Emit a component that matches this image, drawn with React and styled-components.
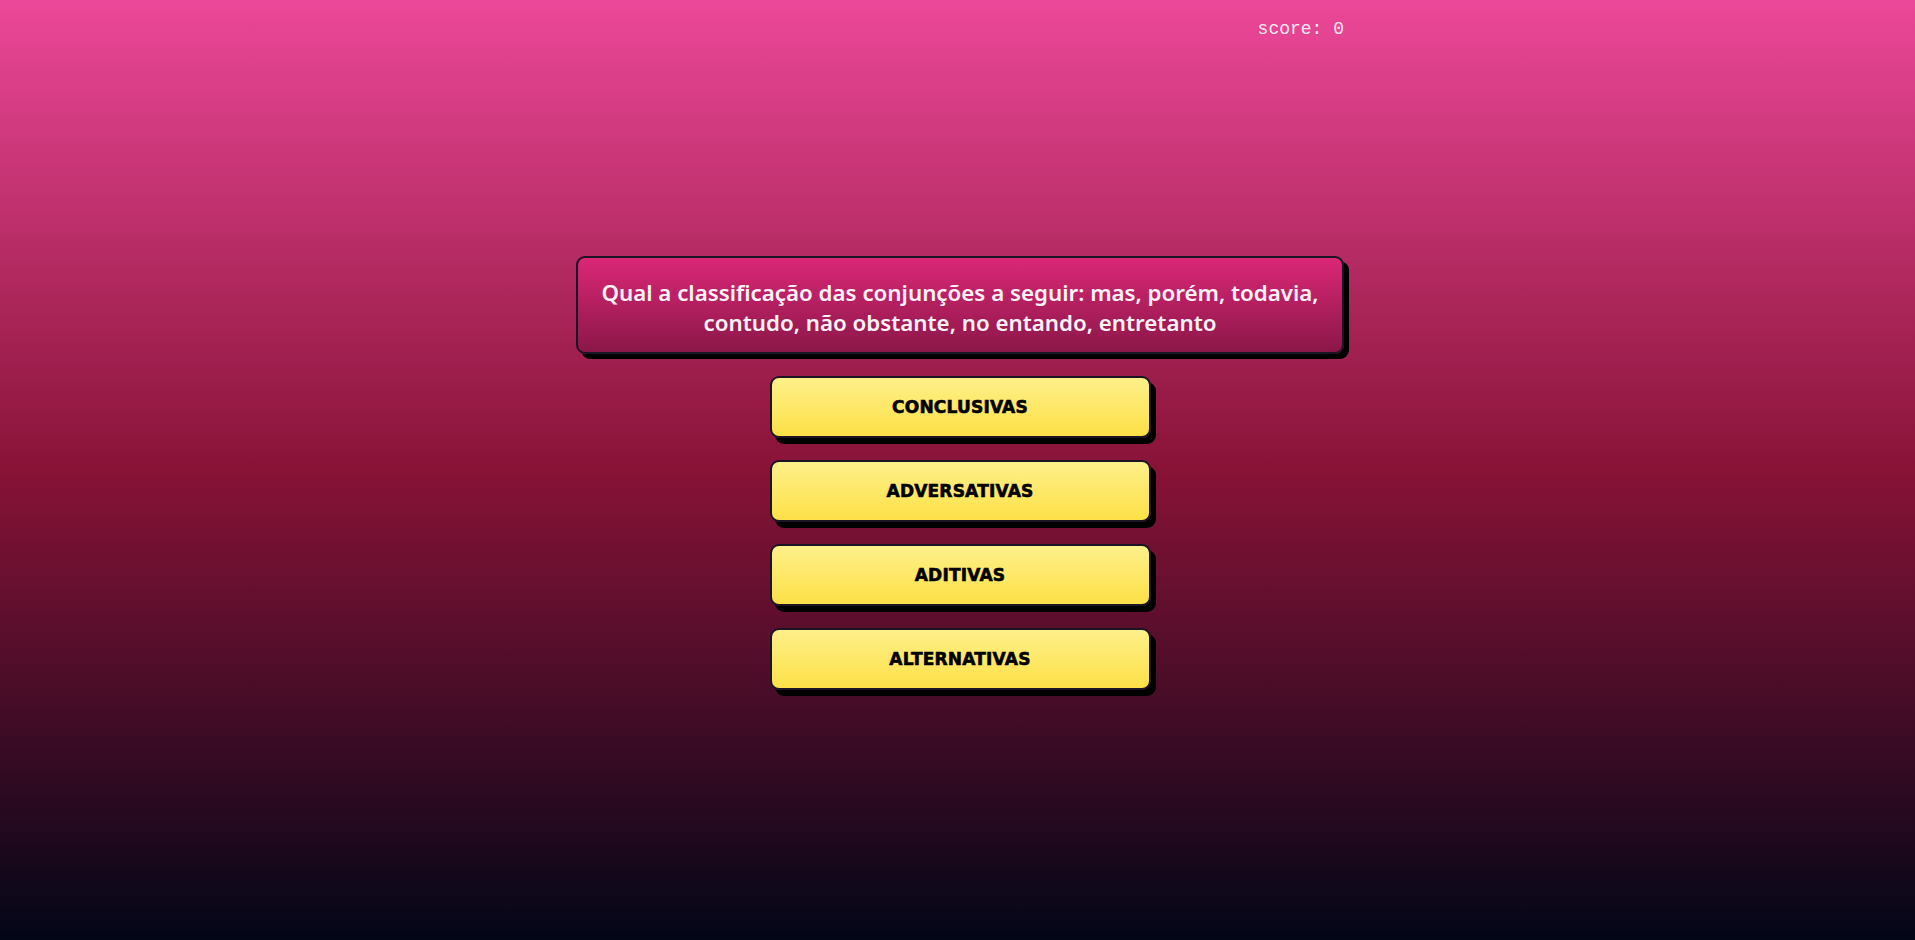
import React from 'react';
import styled, { createGlobalStyle } from 'styled-components';

const GlobalStyle = createGlobalStyle`
  html, body {
    margin: 0;
    padding: 0;
    height: 100%;
  }
  body {
    font-family: "Noto Sans", "Open Sans", sans-serif;
  }
  #root {
    min-height: 100%;
  }
`;

const Page = styled.main`
  min-height: 940px;
  box-sizing: border-box;
  padding-left: 5px;
  background: linear-gradient(to bottom, #ec4899 0%, #881337 50%, #020617 100%);
  display: flex;
  flex-direction: column;
  align-items: center;
`;

const TopBar = styled.header`
  width: 768px;
  display: flex;
  justify-content: flex-end;
  padding-top: 19px;
  height: 23px;
`;

const Score = styled.span`
  font-family: "Liberation Mono", "DejaVu Sans Mono", monospace;
  font-size: 18px;
  font-weight: 300;
  color: rgba(255, 255, 255, 0.9);
`;

const Quiz = styled.section`
  margin-top: 214px;
  width: 768px;
  display: flex;
  flex-direction: column;
  align-items: center;
  gap: 22px;
`;

const Question = styled.h1`
  box-sizing: border-box;
  width: 100%;
  margin: 0;
  padding: 20px 18px 14px;
  border: 2px solid #1a1425;
  border-radius: 9px;
  background: linear-gradient(to bottom, #db2777, #8a1748);
  box-shadow: 5px 5px 0 #000;
  color: #fdf2f8;
  font-family: "Noto Sans", "Open Sans", sans-serif;
  font-size: 22.3px;
  font-weight: 600;
  line-height: 30px;
  text-align: center;
`;

const Answer = styled.button`
  box-sizing: border-box;
  width: 381px;
  height: 62px;
  border: 2px solid #1a1425;
  border-radius: 9px;
  background: linear-gradient(to bottom, #fef08a, #fde047);
  box-shadow: 5px 6px 0 #000;
  color: #000;
  font-family: "DejaVu Sans", "Liberation Sans", sans-serif;
  font-size: 17px;
  font-weight: 700;
  letter-spacing: 0.2px;
  -webkit-text-stroke: 0.6px #000;
  text-transform: uppercase;
  cursor: pointer;
`;

const options = ['conclusivas', 'adversativas', 'aditivas', 'alternativas'];

export default function App() {
  return (
    <>
      <GlobalStyle />
      <Page>
        <TopBar>
          <Score>score: 0</Score>
        </TopBar>
        <Quiz>
          <Question>
            Qual a classificação das conjunções a seguir: mas, porém, todavia, contudo, não obstante, no entando, entretanto
          </Question>
          {options.map((o) => (
            <Answer key={o}>{o}</Answer>
          ))}
        </Quiz>
      </Page>
    </>
  );
}
